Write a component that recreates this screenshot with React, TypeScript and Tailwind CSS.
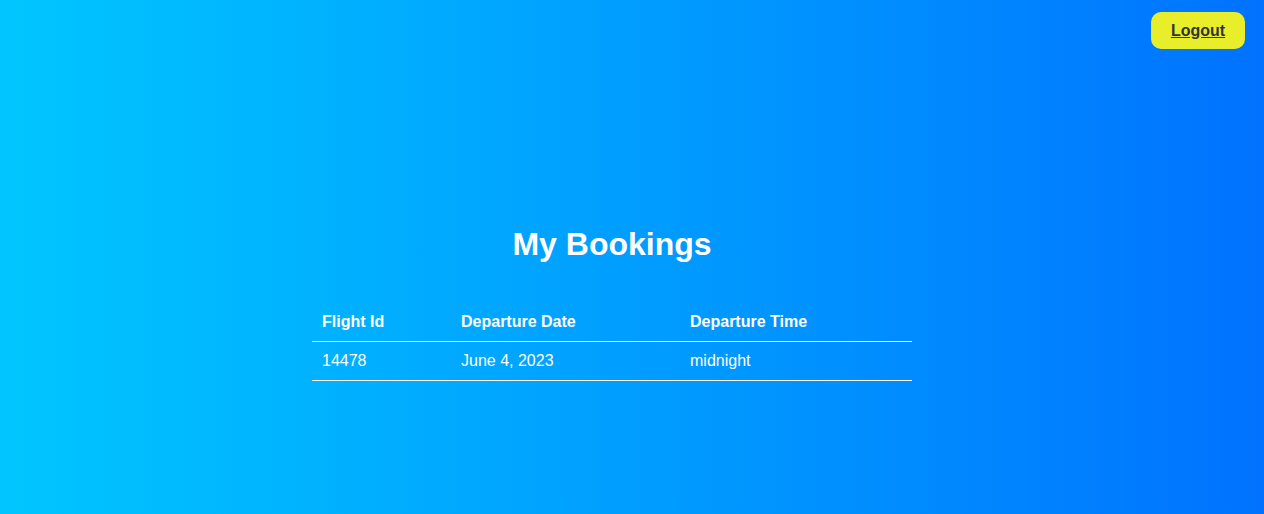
export default function App() {
  const bookings = [{ id: '14478', date: 'June 4, 2023', time: 'midnight' }];

  return (
    <div className="min-h-[514px] w-full bg-gradient-to-r from-[#00c6ff] to-[#0072ff] font-['Liberation_Sans',Arial,sans-serif] text-white">
      {/* Top bar */}
      <div className="flex justify-end pt-3 pr-[19px]">
        <button className="h-[37px] w-[94px] rounded-[10px] bg-[#e8ef2a] text-base font-bold text-[#333333] underline">
          Logout
        </button>
      </div>

      {/* Bookings */}
      <div className="flex flex-col items-center pt-[177px] pr-10">
        <h1 className="text-[32px] font-bold leading-[37px]">My Bookings</h1>
        <table className="mt-[40px] w-[600px] border-collapse text-left text-base">
          <thead>
            <tr className="border-b border-white">
              <th className="w-[139px] p-[10px] font-bold leading-[18px]">Flight Id</th>
              <th className="w-[229px] p-[10px] font-bold leading-[18px]">Departure Date</th>
              <th className="p-[10px] font-bold leading-[18px]">Departure Time</th>
            </tr>
          </thead>
          <tbody>
            {bookings.map((b) => (
              <tr key={b.id} className="border-b border-white">
                <td className="p-[10px] leading-[18px]">{b.id}</td>
                <td className="p-[10px] leading-[18px]">{b.date}</td>
                <td className="p-[10px] leading-[18px]">{b.time}</td>
              </tr>
            ))}
          </tbody>
        </table>
      </div>
    </div>
  );
}
